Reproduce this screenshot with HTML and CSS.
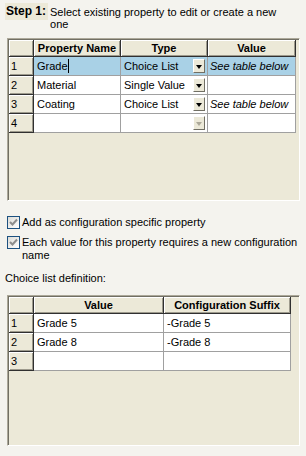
FILE: index.html
```html
<!DOCTYPE html>
<html lang="en">
<head>
    <meta charset="UTF-8">
    <title>Property Editor</title>
    <link rel="stylesheet" href="styles.css">
</head>
<body>
    <div class="step">
        <span class="step-label">Step 1:</span>
        <span class="step-text">Select existing property to edit or create a new one</span>
    </div>

    <div class="grid grid-props">
        <table>
            <colgroup>
                <col class="c-head"><col class="c-87"><col class="c-87"><col class="c-88">
            </colgroup>
            <thead>
                <tr><th></th><th>Property Name</th><th>Type</th><th>Value</th></tr>
            </thead>
            <tbody>
                <tr class="selected">
                    <td class="rh">1</td>
                    <td>Grade<span class="caret"></span></td>
                    <td class="combo">Choice List<span class="drop"></span></td>
                    <td class="note">See table below</td>
                </tr>
                <tr>
                    <td class="rh">2</td>
                    <td>Material</td>
                    <td class="combo">Single Value<span class="drop"></span></td>
                    <td></td>
                </tr>
                <tr>
                    <td class="rh">3</td>
                    <td>Coating</td>
                    <td class="combo">Choice List<span class="drop"></span></td>
                    <td class="note">See table below</td>
                </tr>
                <tr>
                    <td class="rh">4</td>
                    <td></td>
                    <td class="combo"><span class="drop disabled"></span></td>
                    <td></td>
                </tr>
            </tbody>
        </table>
    </div>

    <div class="options">
        <label class="check">
            <span class="box"><svg width="9" height="9" viewBox="0 0 9 9"><path d="M1 4 L3.5 6.5 L8 1.5" fill="none" stroke="#8d8d8d" stroke-width="2"/></svg></span>
            <span>Add as configuration specific property</span>
        </label>
        <label class="check">
            <span class="box"><svg width="9" height="9" viewBox="0 0 9 9"><path d="M1 4 L3.5 6.5 L8 1.5" fill="none" stroke="#8d8d8d" stroke-width="2"/></svg></span>
            <span>Each value for this property requires a new configuration name</span>
        </label>
    </div>

    <div class="caption">Choice list definition:</div>

    <div class="grid grid-choices">
        <table>
            <colgroup>
                <col class="c-head"><col class="c-130"><col class="c-127">
            </colgroup>
            <thead>
                <tr><th></th><th>Value</th><th>Configuration Suffix</th></tr>
            </thead>
            <tbody>
                <tr><td class="rh">1</td><td>Grade 5</td><td>-Grade 5</td></tr>
                <tr><td class="rh">2</td><td>Grade 8</td><td>-Grade 8</td></tr>
                <tr><td class="rh">3</td><td></td><td></td></tr>
            </tbody>
        </table>
    </div>
</body>
</html>
```

FILE: styles.css
```css
body {
    margin: 0;
    width: 306px;
    height: 456px;
    background: #f4f3ee;
    font-family: "Liberation Sans", Arial, sans-serif;
    font-size: 11px;
    color: #000;
    overflow: hidden;
}
.step {
    display: flex;
    align-items: flex-start;
    padding: 3px 14px 0 5px;
}
.step-label {
    background: #ece9d8;
    font-weight: bold;
    font-size: 12px;
    line-height: 17px;
    padding: 0 2px 0 1px;
    flex: none;
}
.step-text {
    padding: 3px 0 0 2px;
    line-height: 12px;
}
.grid {
    margin: 0 6px 0 7px;
    background: #ece9d8;
    border: 1px solid;
    border-color: #aca899 #fff #fff #aca899;
    box-shadow: inset 1px 1px 0 #716f64;
    padding: 1px 0 0 1px;
    box-sizing: border-box;
}
.grid-props {
    margin-top: 8px;
    height: 163px;
}
.grid-choices {
    margin-top: 11px;
    height: 151px;
}
table {
    border-collapse: separate;
    border-spacing: 0;
    table-layout: fixed;
}
.c-head { width: 25px; }
.c-87 { width: 87px; }
.c-88 { width: 88px; }
.c-130 { width: 130px; }
.c-127 { width: 127px; }
th {
    height: 16px;
    padding: 0;
    background: #ece9d8;
    font-weight: bold;
    font-size: 11px;
    text-align: center;
    border-right: 1px solid #303030;
    border-bottom: 1px solid #303030;
    box-shadow: inset 1px 1px 0 #fff, inset -1px -1px 0 #9d9a8c;
}
td {
    height: 18px;
    padding: 0 0 0 3px;
    background: #fff;
    border-right: 1px solid #a0a0a0;
    border-bottom: 1px solid #a0a0a0;
    white-space: nowrap;
    overflow: hidden;
    position: relative;
}
td.rh {
    background: #ece9d8;
    padding-left: 2px;
    border-right-color: #303030;
    border-bottom-color: #303030;
    box-shadow: inset 1px 1px 0 #fff, inset -1px -1px 0 #9d9a8c;
}
tr.selected td:not(.rh) {
    background: #a9d1e6;
}
td.note {
    font-style: italic;
    padding-left: 2px;
}
.caret {
    display: inline-block;
    width: 1px;
    height: 14px;
    background: #000;
    vertical-align: -3px;
}
.drop {
    position: absolute;
    right: 2px;
    top: 2px;
    width: 12px;
    height: 14px;
    box-sizing: border-box;
    background: #ece9d8;
    border: 1px solid;
    border-color: #fff #716f64 #716f64 #fff;
}
.drop::after {
    content: "";
    position: absolute;
    left: 2px;
    top: 5px;
    border-left: 3.5px solid transparent;
    border-right: 3.5px solid transparent;
    border-top: 4px solid #000;
}
.drop.disabled::after {
    border-top-color: #aca899;
}
.options {
    padding: 15px 0 0 7px;
}
.check {
    display: flex;
    align-items: flex-start;
    gap: 2px;
    line-height: 13px;
    margin-bottom: 7px;
}
.box {
    flex: none;
    width: 13px;
    height: 13px;
    box-sizing: border-box;
    border: 1px solid #1c5180;
    background: linear-gradient(135deg, #dcdcd7, #fff);
    display: flex;
    align-items: center;
    justify-content: center;
    margin-top: 0;
}
.caption {
    padding: 3px 0 0 5px;
    line-height: 12px;
}
```
